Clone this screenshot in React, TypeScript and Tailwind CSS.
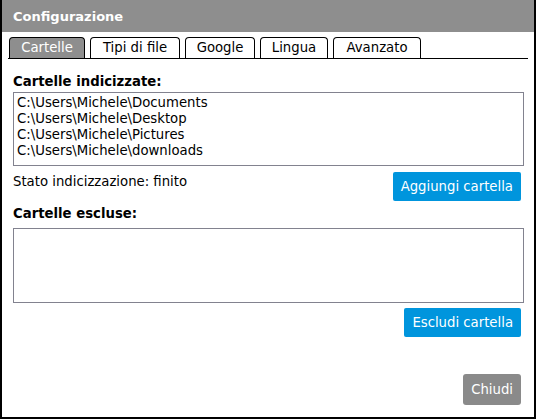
import React from 'react';

const tabs = [
  { label: 'Cartelle', w: 'w-[76px]', active: true },
  { label: 'Tipi di file', w: 'w-[90px]' },
  { label: 'Google', w: 'w-[70px]' },
  { label: 'Lingua', w: 'w-[68px]' },
  { label: 'Avanzato', w: 'w-[88px]' },
];

const folders = [
  'C:\\Users\\Michele\\Documents',
  'C:\\Users\\Michele\\Desktop',
  'C:\\Users\\Michele\\Pictures',
  'C:\\Users\\Michele\\downloads',
];

export default function App() {
  return (
    <div className="w-[536px] h-[419px] bg-white border-2 border-t-0 border-black flex flex-col font-['DejaVu_Sans',sans-serif] text-[13.25px] text-black">
      <div className="h-8 shrink-0 bg-[#8e8e8e] flex items-center px-[11px] pt-[2px] text-white font-bold text-[13px]">
        Configurazione
      </div>

      <div className="mt-[5px] ml-[6px] mr-[6px] flex gap-[5px] border-b border-black pl-[1px]">
        {tabs.map((t) => (
          <div
            key={t.label}
            className={`${t.w} h-[21px] flex items-center justify-center rounded-t-[4px] border border-b-0 border-black ${
              t.active ? 'bg-[#8e8e8e] text-white border-[#6d6d6d]' : 'bg-white'
            }`}
          >
            {t.label}
          </div>
        ))}
      </div>

      <div className="flex flex-col pl-[11px] pr-[10px]">
        <div className="mt-[15px] font-bold leading-4">Cartelle indicizzate:</div>
        <div className="mt-[2px] h-[74px] border border-[#82828f] px-[3px] pt-[2px] leading-4">
          {folders.map((f) => (
            <div key={f}>{f}</div>
          ))}
        </div>

        <div className="mt-[6px] flex items-start justify-between pr-[3px]">
          <span className="mt-[2px] leading-4">Stato indicizzazione: finito</span>
          <button className="h-[29px] px-[8px] rounded-[2px] bg-[#0095dd] text-white">Aggiungi cartella</button>
        </div>

        <div className="mt-[5px] font-bold leading-4">Cartelle escluse:</div>
        <div className="mt-[6px] h-[75px] border border-[#82828f]" />

        <div className="mt-[5px] flex justify-end pr-[3px]">
          <button className="h-[29px] px-[8px] rounded-[2px] bg-[#0095dd] text-white">Escludi cartella</button>
        </div>

        <div className="mt-[37px] flex justify-end pr-[3px]">
          <button className="h-[31px] px-[8px] rounded-[3px] bg-[#8a8a8a] text-white">Chiudi</button>
        </div>
      </div>
    </div>
  );
}
